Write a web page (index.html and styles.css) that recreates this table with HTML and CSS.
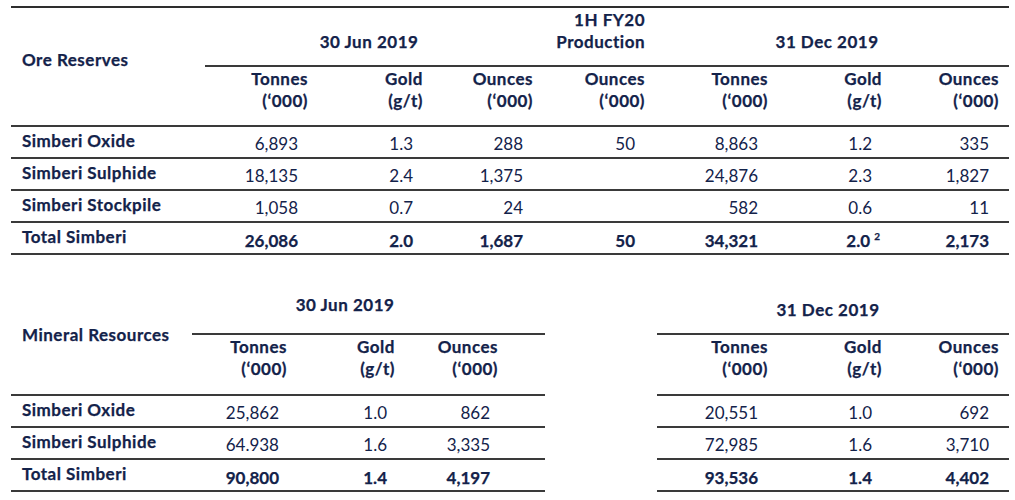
FILE: index.html
```html
<!DOCTYPE html>
<html lang="en">
<head>
<meta charset="utf-8">
<title>Ore Reserves and Mineral Resources</title>
<link rel="stylesheet" href="styles.css">
</head>
<body>
<div class="page">
  <table class="tbl reserves">
    <colgroup>
      <col class="w194"><col class="w113"><col class="w115"><col class="w110">
      <col class="w112"><col class="w123"><col class="w114"><col class="w117">
    </colgroup>
    <thead>
      <tr>
        <th rowspan="2" class="label-head">Ore Reserves</th>
        <th colspan="3" class="grp">30 Jun 2019</th>
        <th class="grp prod">1H FY20<br>Production</th>
        <th colspan="3" class="grp">31 Dec 2019</th>
      </tr>
      <tr class="sub">
        <th>Tonnes<br>(‘000)</th>
        <th>Gold<br>(g/t)</th>
        <th>Ounces<br>(‘000)</th>
        <th>Ounces<br>(‘000)</th>
        <th>Tonnes<br>(‘000)</th>
        <th>Gold<br>(g/t)</th>
        <th>Ounces<br>(‘000)</th>
      </tr>
    </thead>
    <tbody>
      <tr>
        <td class="lbl">Simberi Oxide</td>
        <td class="num">6,893</td><td class="num">1.3</td><td class="num">288</td>
        <td class="num">50</td>
        <td class="num">8,863</td><td class="num">1.2</td><td class="num">335</td>
      </tr>
      <tr>
        <td class="lbl">Simberi Sulphide</td>
        <td class="num">18,135</td><td class="num">2.4</td><td class="num">1,375</td>
        <td class="num"></td>
        <td class="num">24,876</td><td class="num">2.3</td><td class="num">1,827</td>
      </tr>
      <tr>
        <td class="lbl">Simberi Stockpile</td>
        <td class="num">1,058</td><td class="num">0.7</td><td class="num">24</td>
        <td class="num"></td>
        <td class="num">582</td><td class="num">0.6</td><td class="num">11</td>
      </tr>
      <tr class="total">
        <td class="lbl">Total Simberi</td>
        <td class="num">26,086</td><td class="num">2.0</td><td class="num">1,687</td>
        <td class="num">50</td>
        <td class="num">34,321</td><td class="num with-note">2.0 <sup class="note">2</sup></td><td class="num">2,173</td>
      </tr>
    </tbody>
  </table>

  <div class="resources">
    <table class="tbl res-left">
      <colgroup>
        <col class="w181"><col class="w105"><col class="w108"><col class="w103"><col class="w37">
      </colgroup>
      <thead>
        <tr>
          <th rowspan="2" class="label-head res-label">Mineral Resources</th>
          <th colspan="3" class="grp res-grp-left">30 Jun 2019</th>
          <th class="grp res-grp-left"></th>
        </tr>
        <tr class="sub res-sub">
          <th>Tonnes<br>(‘000)</th>
          <th>Gold<br>(g/t)</th>
          <th>Ounces<br>(‘000)</th>
          <th></th>
        </tr>
      </thead>
      <tbody>
        <tr>
          <td class="lbl">Simberi Oxide</td>
          <td class="num n18">25,862</td><td class="num n18">1.0</td><td class="num n18">862</td><td></td>
        </tr>
        <tr>
          <td class="lbl">Simberi Sulphide</td>
          <td class="num n18">64.938</td><td class="num n18">1.6</td><td class="num n18">3,335</td><td></td>
        </tr>
        <tr class="total">
          <td class="lbl">Total Simberi</td>
          <td class="num n18">90,800</td><td class="num n18">1.4</td><td class="num n18">4,197</td><td></td>
        </tr>
      </tbody>
    </table>

    <table class="tbl res-right">
      <colgroup>
        <col class="w121"><col class="w114"><col class="w117">
      </colgroup>
      <thead>
        <tr>
          <th colspan="3" class="grp res-grp-right">31 Dec 2019</th>
        </tr>
        <tr class="sub res-sub">
          <th>Tonnes<br>(‘000)</th>
          <th>Gold<br>(g/t)</th>
          <th>Ounces<br>(‘000)</th>
        </tr>
      </thead>
      <tbody>
        <tr>
          <td class="num">20,551</td><td class="num">1.0</td><td class="num">692</td>
        </tr>
        <tr>
          <td class="num">72,985</td><td class="num">1.6</td><td class="num">3,710</td>
        </tr>
        <tr class="total">
          <td class="num">93,536</td><td class="num">1.4</td><td class="num">4,402</td>
        </tr>
      </tbody>
    </table>
  </div>
</div>
</body>
</html>
```

FILE: styles.css
```css
html, body {
  margin: 0;
  padding: 0;
  background: #ffffff;
}

body {
  font-family: Lato, "Open Sans", "Liberation Sans", sans-serif;
  font-size: 17px;
  line-height: 22px;
  color: #13224a;
}

.page {
  width: 998px;
  padding: 6px 0 0 11px;
}

.tbl {
  border-collapse: separate;
  border-spacing: 0;
  table-layout: fixed;
}

.tbl th,
.tbl td {
  box-sizing: border-box;
  padding: 0;
  vertical-align: top;
}

.reserves {
  width: 998px;
  border-top: 2px solid #2e2e2e;
}

/* column widths */
.w194 { width: 194px; }
.w113 { width: 113px; }
.w115 { width: 115px; }
.w110 { width: 110px; }
.w112 { width: 112px; }
.w123 { width: 123px; }
.w114 { width: 114px; }
.w117 { width: 117px; }
.w181 { width: 181px; }
.w105 { width: 105px; }
.w108 { width: 108px; }
.w103 { width: 103px; }
.w37  { width: 37px; }
.w121 { width: 121px; }

/* header */
.tbl th {
  font-weight: 700;
  letter-spacing: 0.5px;
  -webkit-text-stroke: 0.25px #13224a;
  text-align: right;
  padding-right: 10px;
}

.tbl .label-head {
  text-align: left;
  padding-left: 11px;
  padding-right: 0;
  padding-top: 41px;
  border-bottom: 2px solid #3a3a3a;
}

.tbl .grp {
  height: 59px;
  vertical-align: bottom;
  padding-bottom: 12px;
  text-align: center;
  border-bottom: 2px solid #3a3a3a;
}

.tbl .grp.prod {
  text-align: right;
}

.tbl .sub th {
  height: 60px;
  padding-top: 1px;
  border-bottom: 2px solid #3a3a3a;
}

/* body rows */
.tbl td {
  height: 32px;
  font-weight: 400;
  border-bottom: 2px solid #3a3a3a;
}

.tbl .lbl {
  font-weight: 700;
  letter-spacing: 0.5px;
  -webkit-text-stroke: 0.25px #13224a;
  padding-left: 11px;
  padding-top: 3px;
  white-space: nowrap;
}

.tbl .num {
  text-align: right;
  padding-right: 20px;
  padding-top: 6px;
}

.tbl .num.n18 {
  padding-right: 18px;
}

.tbl .total td {
  font-weight: 700;
  -webkit-text-stroke: 0.25px #13224a;
}

.tbl .total .num {
  padding-top: 7px;
}

.tbl .num.with-note {
  padding-right: 12px;
}

.note {
  font-size: 10px;
  line-height: 0;
  vertical-align: 7px;
}

/* resources section */
.resources {
  display: flex;
  justify-content: space-between;
  margin-top: 35px;
  width: 998px;
}

.res-left {
  width: 534px;
}

.res-right {
  width: 352px;
}

.tbl .res-label {
  padding-top: 34px;
}

.tbl .res-grp-left {
  height: 45px;
  padding-bottom: 17px;
}

.tbl .res-grp-right {
  height: 45px;
  padding-bottom: 12px;
}

.tbl .res-sub th {
  height: 61px;
}
```
